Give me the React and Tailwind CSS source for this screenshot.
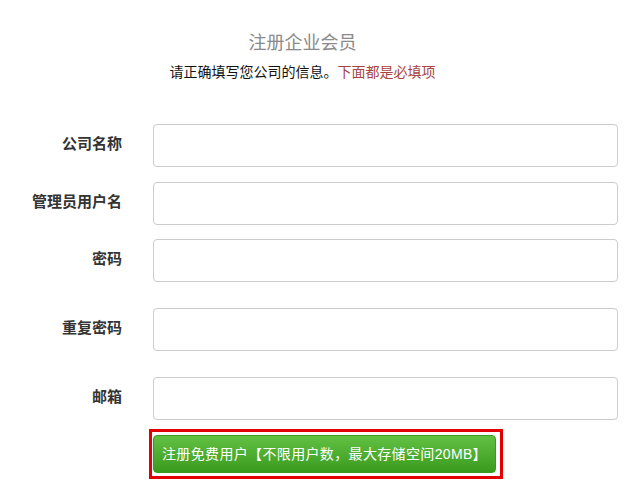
export default function App() {
  const rows = [
    { label: "公司名称", mt: "mt-[42px]", type: "text" },
    { label: "管理员用户名", mt: "mt-[15px]", type: "text" },
    { label: "密码", mt: "mt-[14px]", type: "password" },
    { label: "重复密码", mt: "mt-[26px]", type: "password" },
    { label: "邮箱", mt: "mt-[26px]", type: "email" },
  ];
  return (
    <div className="w-[638px] h-[488px] bg-white font-['Liberation_Sans','Noto_Sans_CJK_SC',sans-serif] overflow-hidden">
      <div className="pt-[31px] w-[605px] text-center">
        <h1 className="text-[18px] leading-[24px] text-[#8a8a8a] font-['Liberation_Serif','Noto_Sans_CJK_SC',serif] font-normal">
          注册企业会员
        </h1>
        <p className="mt-[7px] text-[14px] leading-[20px] text-[#111]">
          请正确填写您公司的信息。
          <span className="text-[#a94442]">下面都是必填项</span>
        </p>
      </div>
      {rows.map((r) => (
        <div key={r.label} className={`flex items-center ${r.mt}`}>
          <label className="w-[122px] text-right font-bold text-[15px] leading-[20px] text-[#333] pb-[4px]">
            {r.label}
          </label>
          <input
            type={r.type}
            className="ml-[31px] w-[465px] h-[43px] border border-[#cccccc] rounded-[4px] bg-white px-3 text-[14px] outline-none"
          />
        </div>
      ))}
      <div className="mt-[9px] ml-[149px] w-[354px] h-[50px] border-[3px] border-[#e30000] pl-[1px] pt-[3px]">
        <button className="w-[343px] h-[38px] rounded-[4px] bg-gradient-to-b from-[#62c143] to-[#399b1d] border border-[#3a9a20] text-white text-[14px] leading-[20px] tracking-[0.35px] flex items-center justify-center">
          注册免费用户【不限用户数，最大存储空间20MB】
        </button>
      </div>
    </div>
  );
}
